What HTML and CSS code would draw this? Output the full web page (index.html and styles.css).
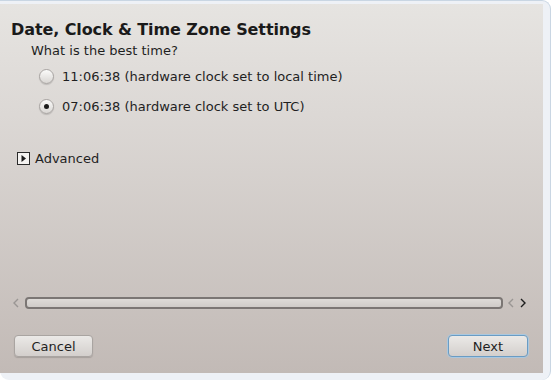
FILE: index.html
```html
<!DOCTYPE html>
<html lang="en">
<head>
  <meta charset="UTF-8">
  <title>Date, Clock &amp; Time Zone Settings</title>
  <link rel="stylesheet" href="styles.css">
</head>
<body>

<div class="window">
  <div class="panel">
    <h1 class="title">Date, Clock &amp; Time Zone Settings</h1>
    <p class="question">What is the best time?</p>

    <div class="options">
      <label class="option">
        <span class="radio"></span>
        <span>11:06:38 (hardware clock set to local time)</span>
      </label>
      <label class="option">
        <span class="radio checked"></span>
        <span>07:06:38 (hardware clock set to UTC)</span>
      </label>
    </div>

    <div class="expander">
      <svg class="expander-icon" width="13" height="13" viewBox="0 0 13 13">
        <rect x="0.5" y="0.5" width="12" height="12" fill="#f4f2f0" stroke="#2a2a2a"/>
        <polygon points="4.5,3 9,6.5 4.5,10" fill="#1a1a1a"/>
      </svg>
      <span>Advanced</span>
    </div>

    <div class="spacer"></div>

    <div class="scroller">
      <svg class="chev" width="8" height="10" viewBox="0 0 8 10">
        <polyline points="6,1 2,5 6,9" fill="none" stroke="#9a9694" stroke-width="1.4"/>
      </svg>
      <div class="track"></div>
      <svg class="chev" width="8" height="10" viewBox="0 0 8 10">
        <polyline points="6,1 2,5 6,9" fill="none" stroke="#9a9694" stroke-width="1.4"/>
      </svg>
      <svg class="chev" width="8" height="10" viewBox="0 0 8 10">
        <polyline points="2,1 6,5 2,9" fill="none" stroke="#1e1e1e" stroke-width="1.4"/>
      </svg>
    </div>

    <div class="buttons">
      <button class="btn">Cancel</button>
      <button class="btn primary">Next</button>
    </div>
  </div>
</div>

</body>
</html>
```

FILE: styles.css
```css
body {
  margin: 0;
  font-family: "DejaVu Sans", sans-serif;
  background-color: #ffffff;
}

.window {
  width: 551px;
  height: 380px;
  box-sizing: border-box;
  padding: 3px 7px 7px 0;
  background-color: #eef1f6;
  border-top: 1px solid #c9d6e3;
  border-right: 1px solid #c9d6e3;
  border-radius: 0 9px 9px 9px;
}

.panel {
  height: 100%;
  display: flex;
  flex-direction: column;
  box-sizing: border-box;
  padding: 0 0 16px 0;
  background: linear-gradient(#e6e4e1, #dcd8d5 30%, #c2bab6);
  color: #1f1f1f;
}

.title {
  margin: 0;
  padding: 16px 0 0 11px;
  font-size: 16px;
  font-weight: bold;
  line-height: 20px;
  letter-spacing: -0.1px;
  color: #1a1a1a;
}

.question {
  margin: 0;
  padding: 3px 0 0 31px;
  font-size: 13px;
  line-height: 16px;
}

.options {
  display: flex;
  flex-direction: column;
  gap: 13px;
  padding: 9px 0 0 39px;
}

.option {
  display: flex;
  align-items: center;
  gap: 8px;
  font-size: 13px;
  line-height: 17px;
}

.radio {
  width: 13px;
  height: 13px;
  border-radius: 50%;
  border: 1px solid #a8a4a2;
  background: linear-gradient(#fbfbfa, #d9d6d3);
  box-shadow: 0 1px 1px rgba(0, 0, 0, 0.15);
  display: flex;
  align-items: center;
  justify-content: center;
}

.radio.checked::after {
  content: "";
  width: 5px;
  height: 5px;
  border-radius: 50%;
  background-color: #1c1c1c;
}

.expander {
  display: flex;
  align-items: center;
  gap: 5px;
  padding: 35px 0 0 17px;
  font-size: 13px;
  line-height: 17px;
}

.expander-icon {
  display: block;
}

.spacer {
  flex: 1;
}

.scroller {
  display: flex;
  align-items: center;
  gap: 4px;
  padding: 0 16px 0 12px;
}

.scroller .chev {
  display: block;
}

.track {
  flex: 1;
  height: 8px;
  margin: 0 0 0 1px;
  border: 2px solid #7b7674;
  border-radius: 4px;
  background: linear-gradient(#dedbd8, #cfcbc8);
  box-shadow: 0 0 0 1px #c9c3bf;
}

.buttons {
  display: flex;
  justify-content: space-between;
  padding: 26px 15px 0 14px;
}

.btn {
  width: 79px;
  height: 22px;
  font-family: "DejaVu Sans", sans-serif;
  font-size: 13px;
  color: #1f1f1f;
  border: 1px solid #a9a4a1;
  border-radius: 4px;
  background: linear-gradient(#ebe9e7, #d3cfcc);
  box-shadow: 0 1px 1px rgba(0, 0, 0, 0.15);
}

.btn.primary {
  width: 80px;
  border: 1px solid #6a9cc4;
  box-shadow: 0 0 0 1px #a9c8e0;
}
```
